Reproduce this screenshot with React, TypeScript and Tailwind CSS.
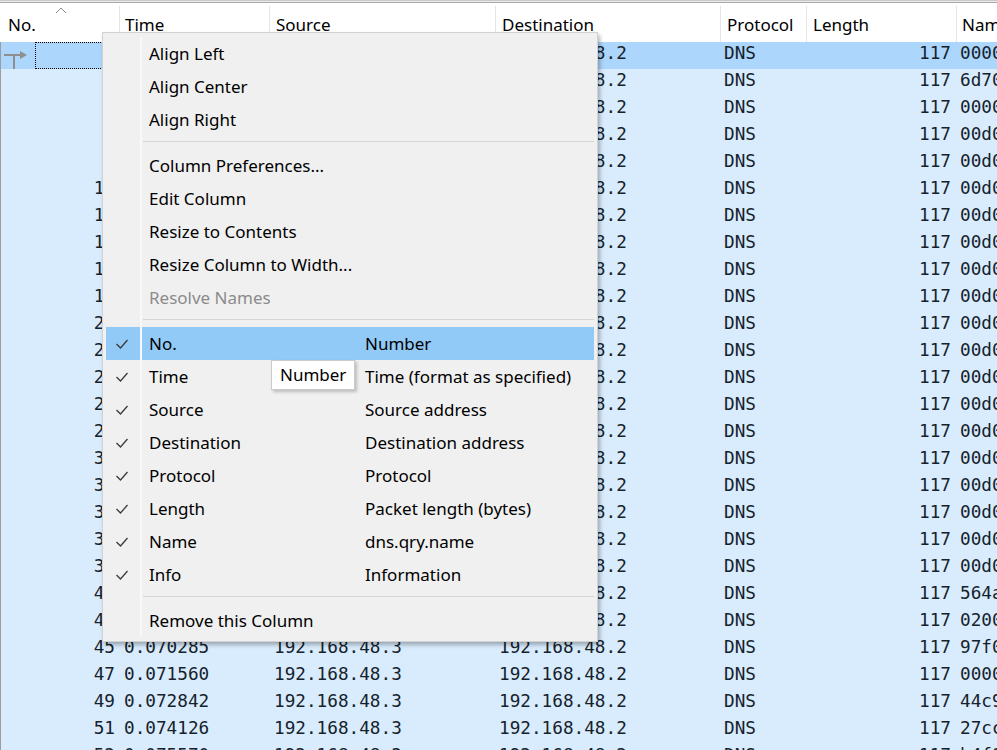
import React from 'react';

const UI_FONT = '"Noto Sans", "Open Sans", sans-serif';
const MONO_FONT = '"DejaVu Sans Mono", "Liberation Mono", monospace';

const times = [
  '0.000000', '0.001297', '0.004215', '0.005532', '0.008114', '0.011420', '0.014027',
  '0.017365', '0.020148', '0.023591', '0.026874', '0.030112', '0.033405', '0.036728',
  '0.039960', '0.043281', '0.046537', '0.049804', '0.053142', '0.056419', '0.059733',
  '0.063058', '0.070285', '0.071560', '0.072842', '0.074126', '0.075570',
];

const namePrefix: Record<number, string> = {
  0: '0000', 1: '6d70', 2: '0000', 20: '564a', 21: '0200', 22: '97f0', 23: '0000', 24: '44c9', 25: '27cc', 26: 'b4f1',
};

const rows = times.map((time, i) => ({
  no: 2 * i + 1,
  time,
  name: (namePrefix[i] ?? '00d0') + '0100000100000000000000.example.lan',
}));

const columnItems = [
  ['No.', 'Number'],
  ['Time', 'Time (format as specified)'],
  ['Source', 'Source address'],
  ['Destination', 'Destination address'],
  ['Protocol', 'Protocol'],
  ['Length', 'Packet length (bytes)'],
  ['Name', 'dns.qry.name'],
  ['Info', 'Information'],
];

const Check = () => (
  <svg width="14" height="12" viewBox="0 0 14 12">
    <path d="M1.5 6 L5.5 10 L12.5 2" fill="none" stroke="#3a3a3a" strokeWidth="1.3" />
  </svg>
);

const MenuItem: React.FC<{ label: string; second?: string; checked?: boolean; active?: boolean; disabled?: boolean }> = ({
  label,
  second,
  checked,
  active,
  disabled,
}) => (
  <div className={`flex h-[33px] items-center ${active ? 'bg-[#91c9f7]' : ''}`}>
    <div className="w-[34px] shrink-0 h-full flex items-center justify-center pr-[2px]">{checked && <Check />}</div>
    <div className={`h-full flex items-center border-l-2 border-[#f8f8f8] pl-[7px] pt-px ${disabled ? 'text-[#8b8b8b]' : 'text-black'}`}>
      <span className="w-[216px] whitespace-nowrap">{label}</span>
      {second && <span className="whitespace-nowrap">{second}</span>}
    </div>
  </div>
);

const Separator = () => (
  <div className="flex h-[13px]">
    <div className="w-[34px] shrink-0" />
    <div className="flex-1 border-l-2 border-[#f8f8f8] pt-[5px]">
      <div className="h-px bg-[#d5d5d5] ml-px" />
    </div>
  </div>
);

const RelatedIcon = () => (
  <svg width="30" height="27" viewBox="0 0 30 27">
    <path d="M3 13 H20" stroke="#8e8e8e" strokeWidth="2" />
    <path d="M13 13 V27" stroke="#8e8e8e" strokeWidth="2" />
    <path d="M19 9 L26 13 L19 17 Z" fill="#8e8e8e" />
  </svg>
);

export default function App() {
  return (
    <div className="relative w-[997px] h-[750px] overflow-hidden bg-white" style={{ fontFamily: UI_FONT }}>
      {/* frame edge */}
      <div className="h-px bg-[#c9c9c9]" />
      <div className="h-px bg-[#ececec]" />
      <div className="h-px bg-[#a9a9a9]" />

      {/* header */}
      <div className="flex h-[39px] pt-[3px] text-[17px] text-black bg-white whitespace-nowrap">
        <div className="relative w-[119px] shrink-0 h-full flex items-center pl-[8px] pt-px">
          No.
          <svg className="absolute left-[55px] top-[1px]" width="12" height="7" viewBox="0 0 12 7">
            <path d="M1 6 L6 1 L11 6" fill="none" stroke="#8a8a8a" strokeWidth="1" />
          </svg>
        </div>
        <div className="w-[150px] shrink-0 h-full flex items-center border-l border-[#e5e5e5] pl-[5px] pt-px">Time</div>
        <div className="w-[226px] shrink-0 h-full flex items-center border-l border-[#e5e5e5] pl-[6px] pt-px">Source</div>
        <div className="w-[225px] shrink-0 h-full flex items-center border-l border-[#e5e5e5] pl-[6px] pt-px">Destination</div>
        <div className="w-[86px] shrink-0 h-full flex items-center border-l border-[#e5e5e5] pl-[6px] pt-px">Protocol</div>
        <div className="w-[150px] shrink-0 h-full flex items-center border-l border-[#e5e5e5] pl-[6px] pt-px">Length</div>
        <div className="flex-1 min-w-0 overflow-hidden h-full flex items-center border-l border-[#e5e5e5] pl-[5px] pt-px">Name</div>
      </div>

      {/* packet list */}
      <div className="border-l border-[#9d9d9d] text-[17.7px] text-[#15222c]" style={{ fontFamily: MONO_FONT }}>
        {rows.map((r, i) => (
          <div key={r.no} className={`flex h-[27px] items-center whitespace-nowrap ${i === 0 ? 'bg-[#acd6fb]' : 'bg-[#d9ecfd]'}`}>
            {i === 0 ? (
              <div className="w-[118px] shrink-0 h-full flex">
                <div className="w-[34px] h-full">
                  <RelatedIcon />
                </div>
                <div className="flex-1 h-full border border-dotted border-black flex items-center justify-end pr-[3px] pb-[3px]">{r.no}</div>
              </div>
            ) : (
              <div className="w-[118px] shrink-0 text-right pr-[4px] pb-[4px]">{r.no}</div>
            )}
            <div className="w-[150px] shrink-0 pl-[5px] pb-[4px]">{r.time}</div>
            <div className="w-[226px] shrink-0 pl-[5px] pb-[4px]">192.168.48.3</div>
            <div className="w-[225px] shrink-0 pl-[4px] pb-[4px]">192.168.48.2</div>
            <div className="w-[86px] shrink-0 pl-[4px] pb-[4px]">DNS</div>
            <div className="w-[150px] shrink-0 text-right pr-[5px] pb-[4px]">117</div>
            <div className="flex-1 min-w-0 pl-[4px] pb-[4px] overflow-hidden">{r.name}</div>
          </div>
        ))}
      </div>

      {/* context menu */}
      <div className="absolute left-[102px] top-[32px] w-[496px] bg-[#f0f0f0] border border-[#d2d2d2] px-[3px] pt-[4px] pb-[4px] text-[17px] shadow-[2px_3px_4px_rgba(0,0,0,0.28)]">
        <MenuItem label="Align Left" />
        <MenuItem label="Align Center" />
        <MenuItem label="Align Right" />
        <Separator />
        <MenuItem label="Column Preferences..." />
        <MenuItem label="Edit Column" />
        <MenuItem label="Resize to Contents" />
        <MenuItem label="Resize Column to Width..." />
        <MenuItem label="Resolve Names" disabled />
        <Separator />
        {columnItems.map(([label, second], i) => (
          <MenuItem key={label} label={label} second={second} checked active={i === 0} />
        ))}
        <Separator />
        <MenuItem label="Remove this Column" />
      </div>

      {/* tooltip */}
      <div className="absolute left-[271px] top-[360px] h-[30px] flex items-center px-[8px] bg-white border border-[#cbcbcb] text-[17px] text-black shadow-[2px_2px_3px_rgba(0,0,0,0.22)]">
        Number
      </div>
    </div>
  );
}
